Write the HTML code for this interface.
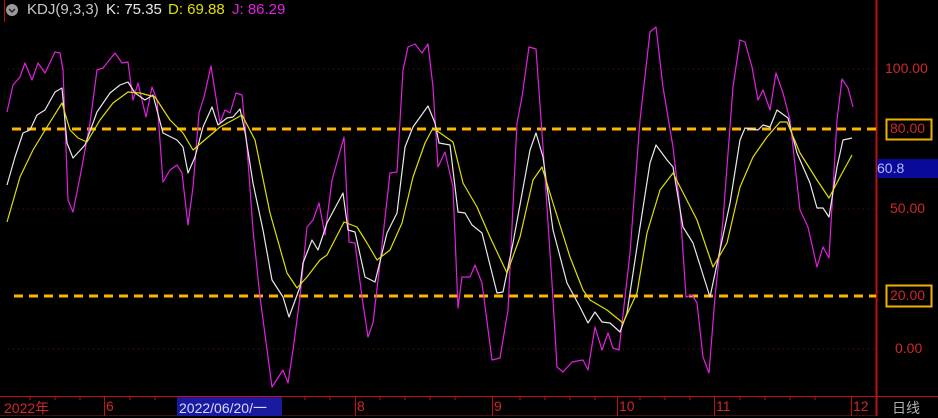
<!DOCTYPE html>
<html><head><meta charset="utf-8"><style>
body{margin:0;background:#000;width:938px;height:416px;overflow:hidden;position:relative;font-family:"Liberation Sans","Noto Sans CJK SC",sans-serif}
.t{position:absolute;white-space:nowrap}
.r{color:#d02828;font-size:14px}
</style></head><body>
<svg width="938" height="416" style="position:absolute;left:0;top:0">
<g stroke="#6a1010" stroke-width="1" stroke-dasharray="1,4">
<line x1="8" y1="69" x2="876" y2="69"/><line x1="8" y1="209" x2="876" y2="209"/><line x1="8" y1="349" x2="876" y2="349"/>
</g>
<line x1="4.5" y1="0" x2="4.5" y2="22" stroke="#b01010"/>
<line x1="876.5" y1="0" x2="876.5" y2="416" stroke="#c01010" stroke-width="2"/>
<line x1="0" y1="396.5" x2="938" y2="396.5" stroke="#c01010"/>
<line x1="0" y1="415.5" x2="876" y2="415.5" stroke="#401010"/>
<g stroke="#c01010"><line x1="104.5" y1="397" x2="104.5" y2="416"/><line x1="177.5" y1="397" x2="177.5" y2="416"/><line x1="355.5" y1="397" x2="355.5" y2="416"/><line x1="492.5" y1="397" x2="492.5" y2="416"/><line x1="617.5" y1="397" x2="617.5" y2="416"/><line x1="714.5" y1="397" x2="714.5" y2="416"/><line x1="851.5" y1="397" x2="851.5" y2="416"/>
<path d="M30 397v3M55 397v3M80 397v3M130 397v3M155 397v3M205 397v3M230 397v3M255 397v3M280 397v3M305 397v3M330 397v3M380 397v3M405 397v3M430 397v3M455 397v3M520 397v3M545 397v3M570 397v3M595 397v3M640 397v3M665 397v3M690 397v3M740 397v3M765 397v3M790 397v3M815 397v3"/></g>
<g stroke="#ffb400" stroke-width="3" stroke-dasharray="9,6"><line x1="12" y1="129" x2="876" y2="129"/><line x1="14" y1="296" x2="876" y2="296"/></g>
<g fill="none" stroke-width="1.2" stroke-linejoin="round">
<polyline stroke="#e020e0" points="7,112 13,85 20,77 25,63 32,80 38,63 45,73 55,52 60,53 63,70 68,200 73,212 80,177 90,123 97,70 103,68 115,53 122,63 128,62 133,100 138,83 146,117 152,87 157,100 163,182 170,170 177,165 182,173 188,225 193,187 199,113 204,97 211,66 220,123 225,110 230,113 236,93 242,95 247,147 253,230 260,297 272,387 283,370 288,383 293,350 300,297 307,227 313,220 319,203 325,235 332,180 344,137 349,242 355,243 362,297 368,337 373,323 380,263 390,173 397,172 403,70 408,47 415,44 422,53 428,44 433,87 438,167 445,152 453,187 458,308 462,277 470,277 475,265 482,283 492,360 500,358 508,310 517,123 522,97 529,47 536,49 543,147 552,283 557,367 563,372 572,362 583,360 588,370 595,327 602,350 608,333 613,348 619,350 630,253 640,120 650,32 656,27 663,87 673,147 680,207 686,297 692,295 697,303 703,357 709,373 715,297 723,220 733,87 740,40 745,42 752,67 758,100 763,90 770,110 776,73 783,93 790,120 800,210 808,227 817,267 823,247 829,258 837,120 842,79 848,88 853,107"/>
<polyline stroke="#e8e8e8" points="7,185 15,157 23,133 30,130 37,115 45,110 55,92 62,88 67,143 73,158 85,145 97,112 110,93 120,85 128,82 135,93 145,100 153,95 163,133 177,140 183,147 188,173 195,157 203,127 212,107 218,125 227,118 233,117 240,109 245,132 253,183 263,230 272,280 283,297 289,317 300,287 303,263 312,240 318,250 327,223 343,193 348,230 355,232 365,277 375,282 387,233 397,213 405,147 413,127 428,106 435,123 439,143 450,145 458,212 465,213 472,225 482,233 497,293 503,292 513,243 530,150 536,133 543,157 553,230 567,283 580,307 588,323 595,312 602,322 610,323 620,332 627,313 640,227 650,163 656,145 667,160 673,167 683,227 693,243 710,297 720,250 730,203 740,140 745,128 758,130 763,125 770,127 777,110 788,118 797,153 810,183 817,208 823,208 829,217 837,167 843,140 852,138"/>
<polyline stroke="#e0e000" points="7,222 20,177 33,150 47,127 62,103 70,130 78,138 87,142 100,120 113,103 128,92 140,93 155,97 170,120 183,133 193,150 207,138 220,127 233,120 242,115 255,140 270,213 287,273 297,288 307,277 320,260 327,255 344,222 357,227 367,243 377,260 390,250 402,223 413,177 425,143 433,128 443,135 453,142 463,183 477,207 490,237 507,273 520,237 533,180 542,167 553,203 570,257 583,290 590,300 607,310 623,323 637,293 647,233 660,190 673,173 697,220 713,267 727,243 740,187 753,157 767,137 780,122 787,122 800,153 817,180 829,198 840,177 852,155"/>
</g>
<circle cx="12" cy="10" r="6" fill="#9a9a9a"/><path d="M9 9l3 3 3-3" stroke="#222" stroke-width="1.5" fill="none"/>
<rect x="886.5" y="119.5" width="45" height="20" fill="none" stroke="#f0b000" stroke-width="2"/>
<rect x="886.5" y="285.5" width="45" height="21" fill="none" stroke="#f0b000" stroke-width="2"/>
<rect x="877" y="159" width="61" height="19" fill="#0a0a9a"/>
<rect x="177" y="397" width="105" height="19" fill="#1a1aa0"/>
</svg>
<div class="t" style="left:27px;top:1px;font-size:15px;color:#c8c8c8">KDJ(9,3,3)</div>
<div class="t" style="left:106px;top:1px;font-size:15px;color:#e8e8e8">K: 75.35</div>
<div class="t" style="left:168px;top:1px;font-size:15px;color:#e0e000">D: 69.88</div>
<div class="t" style="left:232px;top:1px;font-size:15px;color:#e020e0">J: 86.29</div>
<div class="t r" style="left:885px;top:60px">100.00</div>
<div class="t r" style="left:890px;top:120px">80.00</div>
<div class="t" style="left:877px;top:160px;font-size:14px;color:#b8b8ff">60.8</div>
<div class="t r" style="left:890px;top:200px">50.00</div>
<div class="t r" style="left:890px;top:287px">20.00</div>
<div class="t r" style="left:895px;top:340px">0.00</div>
<div class="t r" style="left:4px;top:398px">2022年</div>
<div class="t r" style="left:106px;top:398px">6</div>
<div class="t" style="left:179px;top:398px;font-size:14px;color:#d8d8ff">2022/06/20/一</div>
<div class="t r" style="left:357px;top:398px">8</div>
<div class="t r" style="left:494px;top:398px">9</div>
<div class="t r" style="left:619px;top:398px">10</div>
<div class="t r" style="left:716px;top:398px">11</div>
<div class="t r" style="left:853px;top:398px">12</div>
<div class="t" style="left:892px;top:398px;font-size:14px;color:#b0b0b0">日线</div>
</body></html>
